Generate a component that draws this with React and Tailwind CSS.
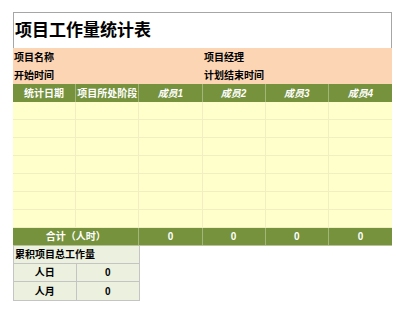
import React from "react";

const FONT = { fontFamily: '"Liberation Sans", "Noto Sans CJK SC", sans-serif' };

const HEADERS = ["统计日期", "项目所处阶段", "成员1", "成员2", "成员3", "成员4"];

export default function App() {
  const rows = Array.from({ length: 7 });

  return (
    <div className="w-[404px] h-[312px] bg-white pt-[12px] pl-[13px]" style={FONT}>
      <div className="w-[379px]">
        {/* title */}
        <div className="h-[36px] border-t border-l border-r border-[#a6a6a6] flex items-center pl-[1px]">
          <span className="text-[17px] font-bold text-black leading-none">项目工作量统计表</span>
        </div>

        {/* project info */}
        <div className="bg-[#fcd5b4] text-[10px] font-bold text-black">
          <div className="grid grid-cols-[189px_190px] h-[18px] items-center">
            <span className="pl-[1px]">项目名称</span>
            <span className="pl-[2px]">项目经理</span>
          </div>
          <div className="grid grid-cols-[189px_190px] h-[18px] items-center">
            <span className="pl-[1px]">开始时间</span>
            <span className="pl-[2px]">计划结束时间</span>
          </div>
        </div>

        {/* header */}
        <div className="grid grid-cols-6 h-[18px] bg-[#76923c] text-white text-[10px] font-bold">
          {HEADERS.map((h, i) => (
            <div
              key={h}
              className={`flex items-center justify-center ${i < 5 ? "border-r border-[#a3b67a]" : ""} ${i >= 2 ? "italic" : ""}`}
            >
              {h}
            </div>
          ))}
        </div>

        {/* data rows */}
        {rows.map((_, r) => (
          <div key={r} className="grid grid-cols-6 h-[18px] bg-[#ffffcc] border-b border-[#f1efc0]">
            {HEADERS.map((h, i) => (
              <div key={h} className={i < 5 ? "border-r border-[#f1efc0]" : ""} />
            ))}
          </div>
        ))}

        {/* total */}
        <div className="grid grid-cols-6 h-[18px] bg-[#76923c] text-white text-[10px] font-bold border-b border-[#b7c29a]">
          <div className="col-span-2 flex items-center justify-center border-r border-[#a3b67a]">合计（人时）</div>
          {[0, 1, 2, 3].map((i) => (
            <div key={i} className={`flex items-center justify-center ${i < 3 ? "border-r border-[#a3b67a]" : ""}`}>
              0
            </div>
          ))}
        </div>

        {/* summary */}
        <div className="w-[127px] text-[10px] font-bold text-black bg-[#ebf1de] border-l border-r border-b border-[#c4c4c4]">
          <div className="h-[18px] flex items-center pl-[1px] border-b border-[#c4c4c4]">累积项目总工作量</div>
          <div className="grid grid-cols-2 h-[18px] border-b border-[#c4c4c4]">
            <div className="flex items-center justify-center border-r border-[#c4c4c4]">人日</div>
            <div className="flex items-center justify-center">0</div>
          </div>
          <div className="grid grid-cols-2 h-[18px]">
            <div className="flex items-center justify-center border-r border-[#c4c4c4]">人月</div>
            <div className="flex items-center justify-center">0</div>
          </div>
        </div>
      </div>
    </div>
  );
}
